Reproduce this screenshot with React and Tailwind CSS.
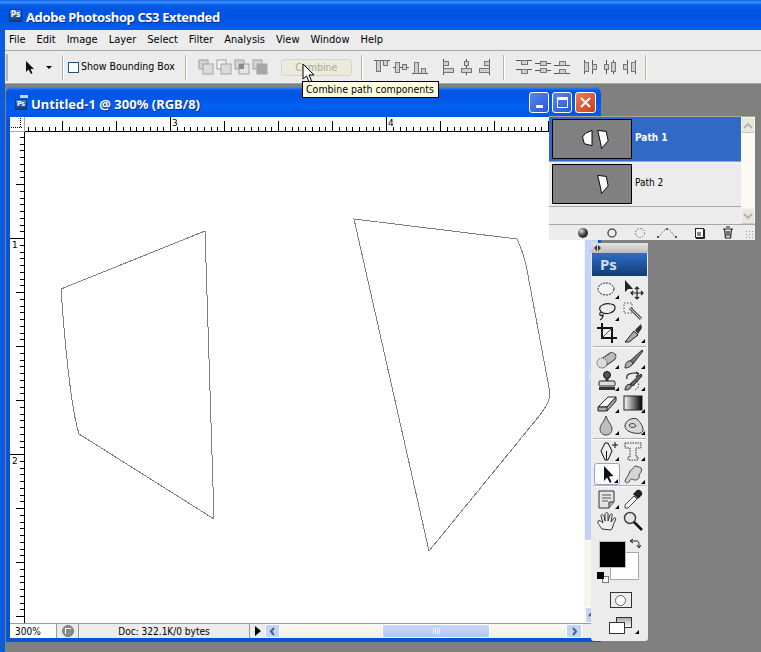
const ui = { fontFamily: '"DejaVu Sans Condensed", "DejaVu Sans", sans-serif' };
const titleFont = { fontFamily: '"Noto Sans", sans-serif' };

const menus = ["File", "Edit", "Image", "Layer", "Select", "Filter", "Analysis", "View", "Window", "Help"];

function Sep() {
  return <div className="w-[2px] h-[25px] bg-[#b5b3a6] border-r border-white shrink-0" />;
}

function PsBadge({ small }) {
  return (
    <div className={`flex items-center justify-center bg-gradient-to-b from-[#3d7fd0] to-[#123b7e] text-white font-bold border border-[#0b3a8a] ${small ? "w-[12px] h-[11px] text-[7px]" : "w-[13px] h-[13px] text-[8px]"}`}>
      Ps
    </div>
  );
}

// path operation icons (new selection, add, subtract, intersect)
function PathOp({ kind }) {
  return (
    <svg width="16" height="16" viewBox="0 0 16 16" className="shrink-0">
      <rect x="1" y="1" width="9" height="9" fill={kind === 1 ? "#f4f4f4" : "#d4d4d4"} stroke="#a0a0a0" />
      <rect x="5" y="5" width="10" height="10" fill={kind === 2 ? "#e4e4e4" : kind === 3 ? "#a8a8a8" : "#dcdcdc"} stroke="#a4a4a4" />
      {kind === 2 && <rect x="5" y="5" width="5" height="5" fill="#8a8a8a" />}
    </svg>
  );
}

// align / distribute icons, a is the line, b and c the two blocks
function AlignIcon({ lines, blocks, w = 16 }) {
  return (
    <svg width={w} height="16" viewBox={`0 0 ${w} 16`} className="shrink-0">
      {lines.map((l, i) => (
        <line key={i} x1={l[0]} y1={l[1]} x2={l[2]} y2={l[3]} stroke="#555" />
      ))}
      {blocks.map((b, i) => (
        <rect key={i} x={b[0]} y={b[1]} width={b[2]} height={b[3]} fill="#cfcfcf" stroke="#777" />
      ))}
    </svg>
  );
}

const alignA = [
  { lines: [[0, 1.5, 16, 1.5]], blocks: [[2.5, 1.5, 4, 11], [9.5, 1.5, 4, 5]] },
  { lines: [[0, 8.5, 16, 8.5]], blocks: [[2.5, 3.5, 4, 10], [9.5, 5.5, 4, 5]] },
  { lines: [[0, 14.5, 16, 14.5]], blocks: [[2.5, 3.5, 4, 11], [9.5, 9.5, 4, 5]] },
];
const alignB = [
  { lines: [[1.5, 0, 1.5, 16]], blocks: [[1.5, 2.5, 5, 4], [1.5, 9.5, 10, 4]], w: 13 },
  { lines: [[6.5, 0, 6.5, 16]], blocks: [[4.5, 2.5, 4, 4], [1.5, 9.5, 10, 4]], w: 13 },
  { lines: [[11.5, 0, 11.5, 16]], blocks: [[6.5, 2.5, 5, 4], [1.5, 9.5, 10, 4]], w: 13 },
];
const distA = [
  { lines: [[0, 1.5, 16, 1.5], [0, 10.5, 16, 10.5]], blocks: [[5.5, 1.5, 6, 4], [5.5, 10.5, 6, 4]] },
  { lines: [[0, 4.5, 16, 4.5], [0, 11.5, 16, 11.5]], blocks: [[5.5, 2.5, 6, 4], [5.5, 9.5, 6, 4]] },
  { lines: [[0, 6.5, 16, 6.5], [0, 14.5, 16, 14.5]], blocks: [[5.5, 2.5, 6, 4], [5.5, 10.5, 6, 4]] },
];
const distB = [
  { lines: [[1.5, 1, 1.5, 15], [9.5, 1, 9.5, 15]], blocks: [[1.5, 3.5, 4, 9], [9.5, 5.5, 4, 5]] },
  { lines: [[4.5, 1, 4.5, 15], [11.5, 1, 11.5, 15]], blocks: [[2.5, 5.5, 4, 5], [9.5, 3.5, 4, 9]] },
  { lines: [[6.5, 1, 6.5, 15], [14.5, 1, 14.5, 15]], blocks: [[2.5, 5.5, 4, 5], [10.5, 3.5, 4, 9]] },
];

function TopRuler() {
  const ticks = [];
  for (let i = 0; i < 84; i++) {
    const x = 145 - 6.75 * 21 + 6.75 * i;
    const k = i - 21 - 0;
    ticks.push({ x, k });
  }
  return (
    <svg width="559" height="15" className="block">
      {ticks.map(({ x, k }) => {
        const n = ((k % 32) + 32) % 32;
        const h = n === 0 ? 14 : n % 8 === 0 ? 10 : 4;
        return <line key={k} x1={Math.round(x) + 0.5} y1={14 - h} x2={Math.round(x) + 0.5} y2="14" stroke="#000" />;
      })}
      <line x1="0" y1="14.5" x2="559" y2="14.5" stroke="#000" />
      <text x="147" y="9" fontSize="9" fill="#000" fontFamily="DejaVu Sans">3</text>
      <text x="363" y="9" fontSize="9" fill="#000" fontFamily="DejaVu Sans">4</text>
    </svg>
  );
}

function LeftRuler() {
  const ticks = [];
  for (let i = 0; i < 75; i++) ticks.push(i);
  return (
    <svg width="15" height="491" className="block shrink-0">
      {ticks.map((i) => {
        const y = Math.round(106 - 6.75 * 16 + 6.75 * i + 0);
        const n = (i + 16) % 32;
        const w = n === 0 ? 15 : n % 8 === 0 ? 9 : 5;
        return <line key={i} x1={15 - w} y1={y + 0.5} x2="15" y2={y + 0.5} stroke="#000" />;
      })}
      <line x1="14.5" y1="0" x2="14.5" y2="491" stroke="#000" />
      <text x="2" y="116" fontSize="9" fill="#000" fontFamily="DejaVu Sans">1</text>
      <text x="2" y="332" fontSize="9" fill="#000" fontFamily="DejaVu Sans">2</text>
    </svg>
  );
}

function Flyout() {
  return <span className="absolute right-[1px] bottom-[1px] w-0 h-0 border-l-[4px] border-l-transparent border-b-[4px] border-b-black" />;
}

const g = { fill: "none", stroke: "#222", strokeWidth: 1.2 };

const toolIcons = {
  marquee: <ellipse cx="10" cy="11" rx="8" ry="6" fill="#f4f4f4" stroke="#222" strokeDasharray="2 1" />,
  move: (
    <>
      <path d="M3 2 L3 14 L6 11 L11 11 Z" fill="#222" />
      <path d="M15 9 V21 M9 15 H21 M13 11 L15 9 L17 11 M13 19 L15 21 L17 19 M11 13 L9 15 L11 17 M19 13 L21 15 L19 17" {...g} />
    </>
  ),
  lasso: <path d="M4 10 C2 5 10 3 15 4 C21 5 20 11 14 13 C10 14 6 14 4 10 M5 12 C2 14 5 17 7 15 C7 17 6 19 4 20" {...g} />,
  wand: (
    <>
      <rect x="2" y="3" width="8" height="10" fill="none" stroke="#555" strokeDasharray="1.5 1.5" />
      <path d="M8 8 L19 19" stroke="#444" strokeWidth="3" />
      <path d="M8 8 L19 19" stroke="#eee" strokeWidth="1" />
    </>
  ),
  crop: (
    <>
      <path d="M6 1 V16 H21 M1 6 H16 V21" fill="none" stroke="#111" strokeWidth="2" />
      <path d="M6 16 L16 6" stroke="#555" />
    </>
  ),
  slice: (
    <>
      <path d="M3 20 L12 9 L16 13 L7 20 Z" fill="#aaa" stroke="#222" />
      <path d="M13 8 L19 2 L20 6 L16 12 Z" fill="#333" />
    </>
  ),
  heal: (
    <>
      <rect x="1" y="8" width="20" height="8" rx="4" transform="rotate(-35 11 12)" fill="#bbb" stroke="#444" />
      <circle cx="6" cy="15" r="5" fill="#ddd" stroke="#444" strokeDasharray="1 1" />
    </>
  ),
  brush: (
    <>
      <path d="M8 13 L20 2 L21 3 L11 16 Z" fill="#777" stroke="#333" />
      <path d="M3 20 C3 15 6 12 9 13 C11 14 11 16 10 17 C8 19 6 20 3 20 Z" fill="#aaa" stroke="#333" />
    </>
  ),
  stamp: (
    <>
      <circle cx="11" cy="5" r="3.5" fill="#555" stroke="#111" />
      <rect x="9.5" y="8" width="3" height="4" fill="#333" />
      <rect x="3" y="11" width="16" height="5" rx="1" fill="#ddd" stroke="#222" />
      <rect x="3" y="17" width="16" height="3" fill="#333" />
    </>
  ),
  history: (
    <>
      <path d="M5 9 C3 3 12 2 17 4 M17 4 L14 2 M17 4 L14 7" {...g} />
      <path d="M8 14 L19 4 L20 6 L11 16 Z" fill="#666" stroke="#222" />
      <path d="M3 20 C3 16 6 13 9 15 C10 18 7 20 3 20 Z" fill="#999" stroke="#222" />
      <path d="M15 11 C18 14 17 18 13 20" fill="none" stroke="#333" strokeDasharray="1.5 1.5" />
    </>
  ),
  eraser: (
    <>
      <path d="M2 15 L12 5 L20 5 L11 15 Z" fill="#f4f4f4" stroke="#222" />
      <path d="M2 15 L11 15 L11 19 L2 19 Z M11 19 L20 9 L20 5 L11 15" fill="#aaa" stroke="#222" />
    </>
  ),
  gradient: (
    <>
      <defs>
        <linearGradient id="gr" x1="0" x2="1">
          <stop offset="0" stopColor="#fff" />
          <stop offset="1" stopColor="#000" />
        </linearGradient>
      </defs>
      <rect x="2" y="4" width="18" height="14" fill="url(#gr)" stroke="#222" />
    </>
  ),
  drop: <path d="M10 2 C8 8 4 11 4 15 C4 19 7 21 10 21 C13 21 16 19 16 15 C16 11 12 8 10 2 Z" fill="#bdbdbd" stroke="#444" />,
  sponge: <path d="M3 12 C3 7 10 3 15 5 C18 8 21 12 21 16 C21 19 17 20 12 19 C7 18 3 16 3 12 Z M7 11 C9 9 13 9 14 12 C12 14 8 14 7 11 Z" fill="#d8d8d8" stroke="#333" />,
  pen: (
    <>
      <path d="M9 3 L12 3 L16 11 L12 20 L9 20 L5 11 Z" fill="#eee" stroke="#111" />
      <path d="M10.5 11 V20" stroke="#111" />
      <path d="M19 2 V8 M16 5 H22" stroke="#111" />
    </>
  ),
  type: <path d="M3 3 H19 V8 H14 V17 H16 V20 H6 V17 H8 V8 H3 Z" fill="none" stroke="#333" strokeDasharray="1.5 1" />,
  arrow: <path d="M8 3 V18 L11 14.5 L14 20 L15.5 19 L13 13.5 L17.5 13 Z" fill="#111" />,
  shape: <path d="M3 18 C5 13 7 12 8 8 C10 6 12 5 13 3 C15 3 17 4 19 5 C21 8 18 10 17 12 C18 16 15 17 13 17 C11 17 10 15 8 17 C7 20 4 21 3 18 Z" fill="#d4d4d4" stroke="#444" />,
  note: (
    <>
      <path d="M3 3 H18 V14 L13 20 H3 Z" fill="#e4e4e4" stroke="#333" />
      <path d="M6 7 H15 M6 10 H15 M6 13 H12" stroke="#555" />
      <path d="M13 20 V14 H18" fill="#aaa" stroke="#333" />
    </>
  ),
  dropper: (
    <>
      <path d="M3 20 L3 17 L12 8 L15 11 L6 20 Z" fill="#f4f4f4" stroke="#444" />
      <path d="M11 6 L15 2 C18 1 21 4 20 7 L16 11 Z" fill="#222" />
    </>
  ),
  hand: <path d="M6 19 C4 16 1 13 2 11 C3 10 5 11 7 13 L5 6 C5 4 7 4 8 6 L9 11 L9 4 C10 2 12 2 12 4 L12 11 L14 5 C15 3 17 4 16 6 L15 12 L18 8 C20 7 20 9 19 11 C17 14 17 18 15 20 Z" fill="#eee" stroke="#333" />,
  zoom: (
    <>
      <circle cx="8" cy="8" r="5.5" fill="#e6e6e6" stroke="#444" strokeWidth="1.5" />
      <path d="M12 12 L20 20" stroke="#111" strokeWidth="2.5" />
    </>
  ),
};

function Tool({ name, flyout = true, active }) {
  return (
    <div className={`relative w-[26px] h-[22px] flex items-center justify-center ${active ? "bg-white border border-[#8aa6c8] rounded-[3px]" : ""}`}>
      <svg width="22" height="22" viewBox="0 0 22 22">
        {toolIcons[name]}
      </svg>
      {flyout && <Flyout />}
    </div>
  );
}

function ToolRow({ children }) {
  return <div className="flex justify-between w-[52px] mx-auto">{children}</div>;
}

function Divider() {
  return <div className="h-[2px] mx-[2px] bg-[#b5b3a6] border-b border-white" />;
}

function Toolbox() {
  return (
    <div className="absolute left-[591px] top-[243px] w-[57px] h-[398px] bg-[#ececec] rounded-b-[3px] flex flex-col">
      <div className="h-[10px] bg-gradient-to-b from-[#e4e4e4] to-[#bcbcbc] flex items-center gap-[1px] pl-[3px]">
        <span className="w-0 h-0 border-y-[3px] border-y-transparent border-r-[3px] border-r-[#333]" />
        <span className="w-0 h-0 border-y-[3px] border-y-transparent border-l-[3px] border-l-[#333]" />
      </div>
      <div className="h-[23px] mx-[1px] bg-gradient-to-b from-[#2f6fc4] to-[#123a77] text-[#cfe0f5] text-[15px] font-bold pl-[8px] leading-[23px]" style={titleFont}>
        Ps
      </div>
      <div className="pt-[2px]">
        <ToolRow><Tool name="marquee" /><Tool name="move" flyout={false} /></ToolRow>
        <ToolRow><Tool name="lasso" /><Tool name="wand" flyout={false} /></ToolRow>
        <ToolRow><Tool name="crop" flyout={false} /><Tool name="slice" /></ToolRow>
      </div>
      <div className="mt-[2px]"><Divider /></div>
      <div>
        <ToolRow><Tool name="heal" /><Tool name="brush" /></ToolRow>
        <ToolRow><Tool name="stamp" /><Tool name="history" /></ToolRow>
        <ToolRow><Tool name="eraser" /><Tool name="gradient" /></ToolRow>
        <ToolRow><Tool name="drop" /><Tool name="sponge" /></ToolRow>
      </div>
      <div className="mt-[2px]"><Divider /></div>
      <div>
        <ToolRow><Tool name="pen" /><Tool name="type" /></ToolRow>
        <div className="h-[1px]" />
        <ToolRow><Tool name="arrow" active /><Tool name="shape" /></ToolRow>
      </div>
      <Divider />
      <div className="pt-[1px]">
        <ToolRow><Tool name="note" /><Tool name="dropper" flyout={false} /></ToolRow>
        <ToolRow><Tool name="hand" flyout={false} /><Tool name="zoom" flyout={false} /></ToolRow>
      </div>
      {/* colour swatches */}
      <div className="relative h-[44px] mt-[9px]">
        <div className="absolute left-[19px] top-[11px] w-[29px] h-[28px] bg-white border border-[#aaa]" />
        <div className="absolute left-[8px] top-0 w-[27px] h-[27px] bg-black border border-[#bbb]" />
        <svg width="12" height="12" viewBox="0 0 12 12" className="absolute left-[38px] top-[-3px]">
          <path d="M1 3 H8 C10 3 10 6 10 9 M1 3 L4 1 M1 3 L4 5 M10 10 L8 7 M10 10 L12 7" fill="none" stroke="#222" />
        </svg>
        <div className="absolute left-[11px] top-[35px] w-[7px] h-[7px] bg-white border border-[#777]" />
        <div className="absolute left-[6px] top-[31px] w-[7px] h-[7px] bg-black" />
      </div>
      <div className="flex justify-center mt-[7px] pl-[2px]">
        <div className="w-[22px] h-[16px] border border-[#333] bg-[#ececec] flex items-center justify-center">
          <div className="w-[11px] h-[11px] rounded-full bg-white border border-[#666]" />
        </div>
      </div>
      <div className="relative w-[24px] h-[18px] mt-[9px] ml-[18px]">
        <div className="absolute left-[7px] top-0 w-[16px] h-[11px] border border-[#333] bg-gradient-to-b from-[#aaa] to-white" />
        <div className="absolute left-0 top-[5px] w-[16px] h-[12px] border border-[#333] bg-white" />
        <span className="absolute right-[-6px] bottom-[1px] w-0 h-0 border-l-[4px] border-l-transparent border-b-[4px] border-b-black" />
      </div>
    </div>
  );
}

function PathRow({ label, selected, showLeft }) {
  return (
    <div className={`h-[45px] flex items-center pl-[3px] gap-[3px] border-b border-[#aca899] ${selected ? "bg-[#3169c6] text-white font-bold" : "bg-[#ececec] text-black"}`}>
      <svg width="80" height="40" viewBox="0 0 80 40" className="border border-black bg-[#808080] shrink-0">
        {showLeft && <path d="M40 11 L40 27 L32 25 L30 18 L33 14 Z" fill="#fff" stroke="#000" />}
        <path d="M46 11 L55 12 L57 22 L50 30 L49 24 Z" fill="#fff" stroke="#000" />
      </svg>
      <span className="text-[10px] mb-[3px]">{label}</span>
    </div>
  );
}

function ScrollBtn({ up }) {
  return (
    <div className="h-[16px] bg-[#e8e8e0] border border-[#f6f6ee] border-b-[#c8c8b8] flex items-center justify-center">
      <svg width="10" height="7" viewBox="0 0 10 7">
        <path d={up ? "M1 6 L5 2 L9 6" : "M1 1 L5 5 L9 1"} fill="none" stroke="#b4b4a8" strokeWidth="2" />
      </svg>
    </div>
  );
}

function PathsPanel() {
  return (
    <div className="absolute left-[549px] top-[116px] w-[206px] h-[124px] bg-[#ececec] border-t border-[#aca899] flex flex-col">
      <div className="flex h-[108px] border-b border-[#aca899]">
        <div className="flex-1 flex flex-col">
          <PathRow label="Path 1" selected showLeft />
          <PathRow label="Path 2" />
        </div>
        <div className="w-[14px] bg-[#fbfbf3] flex flex-col justify-between">
          <ScrollBtn up />
          <ScrollBtn />
        </div>
      </div>
      <div className="flex-1 relative flex items-center pl-[28px] gap-[17px]">
        <svg width="12" height="12" viewBox="0 0 12 12" className="shrink-0">
          <defs>
            <radialGradient id="ball" cx="0.35" cy="0.3">
              <stop offset="0" stopColor="#ddd" />
              <stop offset="1" stopColor="#333" />
            </radialGradient>
          </defs>
          <circle cx="6" cy="6" r="5" fill="url(#ball)" />
        </svg>
        <svg width="12" height="12" viewBox="0 0 12 12" className="shrink-0">
          <circle cx="6" cy="6" r="4" fill="none" stroke="#555" strokeWidth="1.5" />
        </svg>
        <svg width="12" height="12" viewBox="0 0 12 12" className="shrink-0 -ml-[1px]">
          <circle cx="6" cy="6" r="4.5" fill="none" stroke="#666" strokeDasharray="1.5 1.5" />
        </svg>
        <svg width="20" height="12" viewBox="0 0 20 12" className="shrink-0 -ml-[6px]">
          <path d="M1 10 C4 9 6 2 10 2 C14 2 16 9 19 10" fill="none" stroke="#666" strokeDasharray="1.5 1.5" />
          <rect x="0" y="9" width="2" height="2" fill="#555" />
          <rect x="9" y="1" width="2" height="2" fill="#555" />
          <rect x="18" y="9" width="2" height="2" fill="#555" />
        </svg>
        <svg width="12" height="12" viewBox="0 0 12 12" className="shrink-0">
          <rect x="1.5" y="1.5" width="8" height="9" fill="#fff" stroke="#222" />
          <rect x="3" y="5" width="4" height="4" fill="#888" />
          <path d="M10.5 2 V11.5 H2" stroke="#222" fill="none" />
        </svg>
        <svg width="12" height="13" viewBox="0 0 12 13" className="shrink-0 -ml-[1px]">
          <path d="M1 3 H11 M4 1 H8 M2.5 3 L3.5 12 H8.5 L9.5 3 M5 5 V10 M7 5 V10" fill="none" stroke="#222" strokeWidth="1.2" />
        </svg>
        <div className="absolute right-[1px] bottom-[1px] w-[9px] h-[9px] bg-[radial-gradient(#999_1px,transparent_1px)] bg-[length:3px_3px]" />
      </div>
    </div>
  );
}

function DocWindow() {
  return (
    <div className="absolute left-[6px] top-[87px] w-[595px] h-[555px] rounded-t-[7px] bg-[#0453dc] flex flex-col overflow-hidden">
      <div className="h-[30px] shrink-0 bg-[linear-gradient(#3d8ffb_0,#0a5be6_3px,#0054e3_8px,#0060f0_20px,#0056e6_30px)] flex items-center pl-[9px]">
        <div className="relative w-[13px] h-[15px] mr-[3px] shrink-0">
          <div className="absolute right-0 top-0 w-[8px] h-[3px] bg-[#c8d4ea]" />
          <div className="absolute left-0 bottom-0"><PsBadge small /></div>
        </div>
        <span className="mt-[6px] text-white font-bold text-[13px] whitespace-nowrap [text-shadow:1px_1px_#0a2f8a]" style={titleFont}>Untitled-1 @ 300% (RGB/8)</span>
        <div className="ml-auto mr-[5px] flex gap-[3px]">
          <div className="w-[20px] h-[21px] rounded-[3px] border border-white bg-gradient-to-br from-[#5a86ea] to-[#2a56d4] flex items-end justify-center pb-[4px]">
            <div className="w-[7px] h-[3px] bg-white" />
          </div>
          <div className="w-[20px] h-[21px] rounded-[3px] border border-white bg-gradient-to-br from-[#5a86ea] to-[#2a56d4] flex items-center justify-center">
            <div className="w-[11px] h-[11px] border border-white border-t-[3px]" />
          </div>
          <div className="w-[21px] h-[21px] rounded-[3px] border border-white bg-gradient-to-br from-[#ee7a52] to-[#cf3d12] flex items-center justify-center">
            <svg width="11" height="11" viewBox="0 0 11 11">
              <path d="M1 1 L10 10 M10 1 L1 10" stroke="#fff" strokeWidth="2" />
            </svg>
          </div>
        </div>
      </div>

      <div className="flex-1 ml-[4px] mr-[3px] mb-[4px] bg-white flex flex-col min-h-0">
        <div className="flex h-[15px] shrink-0">
          <div className="w-[15px] shrink-0 border-r border-b border-[#a8a8a8]">
            <svg width="14" height="14" viewBox="0 0 14 14">
              <path d="M10.5 1 V11 M1 10.5 H13" stroke="#000" strokeDasharray="1 1" />
            </svg>
          </div>
          <TopRuler />
          <div className="flex-1 bg-[#ececec]" />
        </div>
        <div className="flex flex-1 min-h-0">
          <LeftRuler />
          <svg width="559" height="491" viewBox="25 132 559 491" className="block shrink-0">
            <path d="M61 289 L205 231 L214 519 L79 434 C70 405 65 345 61 289 Z" fill="none" stroke="#808080" strokeWidth="1" shapeRendering="crispEdges" />
            <path d="M354 219 L517 239 C522 250 525 258 527 270 L550 393 C550 400 547 405 540 415 L429 551 Z" fill="none" stroke="#808080" strokeWidth="1" shapeRendering="crispEdges" />
          </svg>
          {/* vertical scrollbar, mostly behind the floating panels */}
          <div className="flex-1 bg-[#f6f6ec] flex flex-col pl-[1px]">
            <div className="mt-[78px] h-[331px] bg-[#c4d4f8] border-y border-white flex flex-col items-center justify-center gap-[1px]">
              <span className="w-[5px] h-[1px] bg-[#eef3ff]" />
              <span className="w-[5px] h-[1px] bg-[#eef3ff]" />
              <span className="w-[5px] h-[1px] bg-[#eef3ff]" />
              <span className="w-[5px] h-[1px] bg-[#eef3ff]" />
            </div>
            <div className="mt-auto h-[16px] bg-[#c4d4f8] border border-white flex items-center justify-center">
              <svg width="8" height="8" viewBox="0 0 8 8"><path d="M1 5 L4 2 L7 5" fill="none" stroke="#4d6185" strokeWidth="2" /></svg>
            </div>
          </div>
        </div>
        <div className="h-[15px] shrink-0 flex border-t border-[#9a9a9a] text-[10px] text-black bg-[#ececec]">
          <div className="w-[47px] bg-white border-r border-[#9a9a9a] pl-[5px] leading-[15px]">300%</div>
          <div className="w-[22px] border-r border-[#9a9a9a] flex items-center justify-center">
            <div className="w-[12px] h-[12px] rounded-full bg-[#8c8c8c] border border-[#777] flex items-center justify-center">
              <div className="w-[6px] h-[6px] border-l border-t border-white" />
            </div>
          </div>
          <div className="w-[171px] text-center leading-[15px] border-r border-[#9a9a9a]">Doc: 322.1K/0 bytes</div>
          <div className="w-[15px] flex items-center justify-center">
            <span className="w-0 h-0 border-y-[5px] border-y-transparent border-l-[6px] border-l-black" />
          </div>
          <div className="w-[318px] flex items-center bg-gradient-to-b from-[#fbfbf4] to-[#eeeee4] relative">
            <div className="w-[15px] h-[14px] bg-[#c4d4f8] border border-white flex items-center justify-center">
              <svg width="7" height="9" viewBox="0 0 7 9"><path d="M5 1 L2 4.5 L5 8" fill="none" stroke="#4d6185" strokeWidth="2" /></svg>
            </div>
            <div className="ml-[102px] w-[108px] h-[14px] bg-gradient-to-b from-[#c8d8fb] to-[#b4c8f6] border border-white rounded-[2px] flex items-center justify-center gap-[1px]">
              <span className="w-[1px] h-[6px] bg-[#eef3ff]" />
              <span className="w-[1px] h-[6px] bg-[#eef3ff]" />
              <span className="w-[1px] h-[6px] bg-[#eef3ff]" />
              <span className="w-[1px] h-[6px] bg-[#eef3ff]" />
            </div>
            <div className="ml-auto mr-[1px] w-[16px] h-[14px] bg-[#c4d4f8] border border-white flex items-center justify-center">
              <svg width="7" height="9" viewBox="0 0 7 9"><path d="M2 1 L5 4.5 L2 8" fill="none" stroke="#4d6185" strokeWidth="2" /></svg>
            </div>
          </div>
          <div className="flex-1 bg-[#ececec]" />
        </div>
      </div>
    </div>
  );
}

export default function App() {
  return (
    <div className="relative w-[761px] h-[652px] bg-[#808080] overflow-hidden flex flex-col" style={ui}>
      {/* title bar */}
      <div className="h-[30px] shrink-0 bg-[linear-gradient(#0a5be6_0,#3d93ff_2px,#0a5fe8_5px,#0054e3_10px,#0058e6_24px,#0062f0_30px)] flex items-center pl-[9px] gap-[4px]">
        <PsBadge />
        <span className="mt-[6px] text-white font-bold text-[13px] tracking-[-0.4px] whitespace-nowrap [text-shadow:1px_1px_#0a2f8a]" style={titleFont}>Adobe Photoshop CS3 Extended</span>
      </div>

      {/* menu bar */}
      <div className="h-[20px] shrink-0 bg-[#ececec] ml-[4px] flex items-center pl-[5px] gap-[11px] text-[11px] text-black">
        {menus.map((m) => (
          <span key={m}>{m}</span>
        ))}
      </div>

      {/* options bar */}
      <div className="h-[34px] shrink-0 bg-[#ececec] ml-[4px] border-t border-[#aca899] border-b border-b-[#aca899] flex items-center text-[10.5px] text-black">
        <div className="w-[2px] ml-[2px] h-[27px] bg-[#b5b3a6] mr-[14px] shrink-0" />
        <svg width="12" height="15" viewBox="0 0 12 15" className="shrink-0 ml-[3px]">
          <path d="M1 1 V12 L3.5 9.5 L6 14 L7.5 13 L5.5 9 L9 9 Z" fill="#111" />
        </svg>
        <span className="ml-[9px] w-0 h-0 border-x-[3px] border-x-transparent border-t-[3px] border-t-black shrink-0" />
        <div className="ml-[10px]"><Sep /></div>
        <div className="ml-[4px] w-[11px] h-[11px] border border-[#1c5180] bg-white shrink-0" />
        <span className="ml-[2px] whitespace-nowrap">Show Bounding Box</span>
        <div className="ml-[10px]"><Sep /></div>
        <div className="ml-[11px] flex gap-[2px]">
          <PathOp kind={0} />
          <PathOp kind={1} />
          <PathOp kind={2} />
          <PathOp kind={3} />
        </div>
        <div className="ml-[13px] w-[71px] h-[17px] rounded-[3px] bg-[#ebebdd] border border-[#d6d4c4] text-[#a8a89a] text-center leading-[15px] shrink-0">Combine</div>
        <div className="ml-[9px]"><Sep /></div>
        <div className="ml-[11px] flex gap-[3px]">
          {alignA.map((a, i) => <AlignIcon key={i} {...a} />)}
        </div>
        <div className="ml-[14px] flex gap-[5px]">
          {alignB.map((a, i) => <AlignIcon key={i} {...a} />)}
        </div>
        <div className="ml-[12px]"><Sep /></div>
        <div className="ml-[11px] flex gap-[3px]">
          {distA.map((a, i) => <AlignIcon key={i} {...a} />)}
        </div>
        <div className="ml-[13px] flex gap-[3px]">
          {distB.map((a, i) => <AlignIcon key={i} {...a} />)}
        </div>
        <div className="ml-[8px]"><Sep /></div>
      </div>

      {/* main window left border */}
      <div className="absolute left-0 top-[30px] bottom-0 w-[5px] bg-[#0a5ae2]" />

      <DocWindow />
      <PathsPanel />
      <Toolbox />

      {/* tooltip */}
      <div className="absolute left-[302px] top-[81px] w-[137px] h-[17px] bg-[#ffffe1] border border-black text-[10.5px] leading-[15px] pl-[3px] text-black whitespace-nowrap">
        Combine path components
      </div>
      <svg width="13" height="21" viewBox="0 0 13 21" className="absolute left-[302px] top-[63px]">
        <path d="M1 1 V16 L4.5 13 L7 19 L9.5 18 L7 12 L12 12 Z" fill="#fff" stroke="#000" />
      </svg>
    </div>
  );
}
